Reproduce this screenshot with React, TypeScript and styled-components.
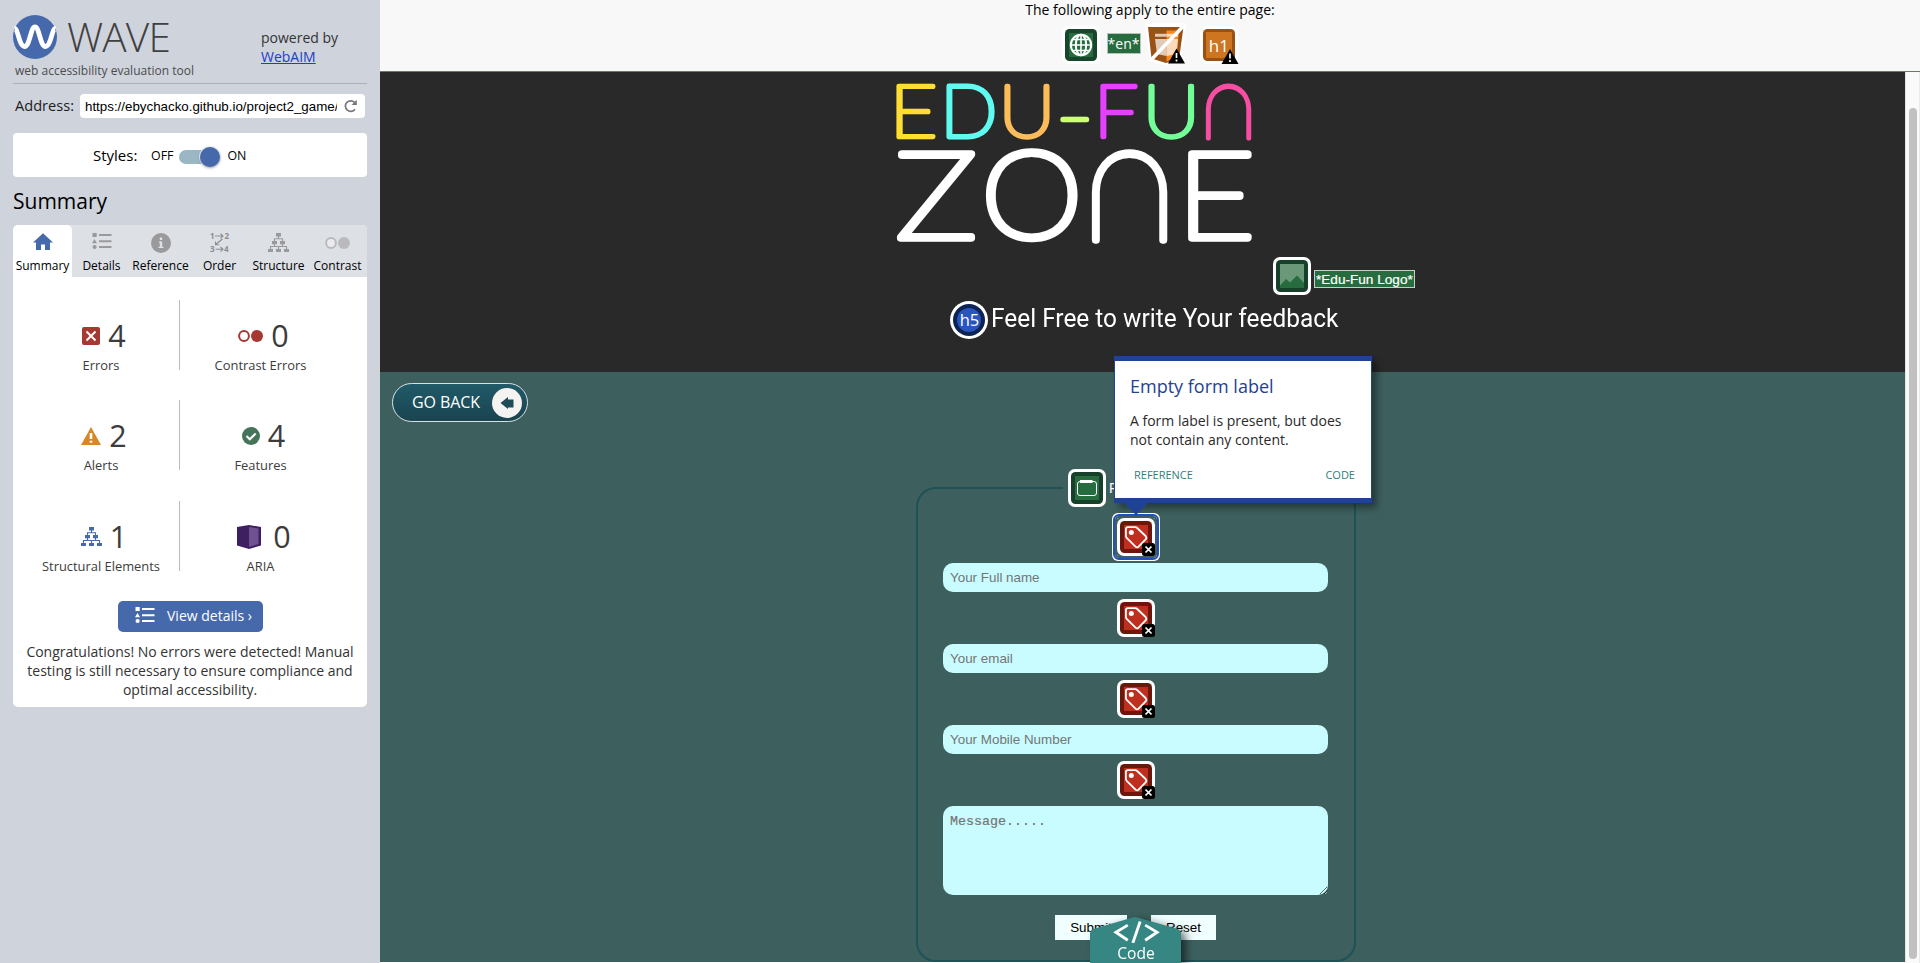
import React, { useLayoutEffect, useState } from 'react';
import styled, { createGlobalStyle, css } from 'styled-components';

const sans = '"Open Sans", "Noto Sans", sans-serif';
const arial = '"Liberation Sans", Arial, sans-serif';

const GlobalStyle = createGlobalStyle`
  *, *::before, *::after { box-sizing: border-box; }
  body { margin: 0; overflow: hidden; background: #fff; font-family: ${sans}; }
  svg { display: block; }
`;

const Shell = styled.div`
  display: flex;
  width: 1920px;
  height: 963px;
  overflow: hidden;
`;

/* ---------- sidebar ---------- */

const Sidebar = styled.aside`
  width: 380px;
  flex: none;
  padding: 0 13px;
  background: #ced3dc;
  color: #000;
`;

const Brand = styled.header`
  display: flex;
  justify-content: space-between;
  height: 84px;
  padding-top: 15px;
  border-bottom: 1px solid #adb1b5;
`;

const BrandRow = styled.div`
  display: flex;
  gap: 10px;
  height: 44px;
`;

const BrandName = styled.span`
  font-size: 40.5px;
  font-weight: 300;
  line-height: 44px;
  color: #404040;
  letter-spacing: -0.8px;
`;

const Tagline = styled.div`
  padding: 4px 0 0 2px;
  font-size: 12px;
  line-height: 16px;
  color: #4c4c4c;
  white-space: nowrap;
`;

const Powered = styled.div`
  width: 106px;
  padding-top: 13px;
  font-size: 14px;
  line-height: 19px;
  color: #333;
  a { color: #2040c0; }
`;

const AddressRow = styled.div`
  display: flex;
  align-items: center;
  height: 24px;
  margin-top: 10px;
  padding: 0 2px;
  font-size: 14.6px;
  line-height: 24px;
`;

const AddressLabel = styled.span`
  width: 65px;
  padding-bottom: 2px;
  color: #1c1c1c;
`;

const AddressBox = styled.div`
  display: flex;
  align-items: center;
  width: 285px;
  height: 24px;
  padding: 0 7px 0 5px;
  justify-content: space-between;
  background: #fff;
  border-radius: 4px;
`;

const Url = styled.span`
  width: 252px;
  overflow: hidden;
  white-space: nowrap;
  font: 13.33px/24px ${arial};
  padding-top: 1px;
`;

const StylesBar = styled.div`
  display: flex;
  align-items: center;
  height: 44px;
  margin-top: 15px;
  padding-left: 80px;
  background: #fff;
  border-radius: 4px;
  font-size: 12.4px;
`;

const StylesLabel = styled.span`
  width: 58px;
  font-size: 15px;
`;

const Switch = styled.span`
  display: flex;
  align-items: center;
  width: 35px;
  height: 14px;
  margin: 3px 13px 0 6px;
  border-radius: 7px;
  background: #9bb7c4;
`;

const Knob = styled.span`
  width: 20px;
  height: 20px;
  margin-left: 21px;
  flex: none;
  border-radius: 50%;
  background: #4669ab;
  box-shadow: 0 1px 3px rgba(0, 0, 0, 0.35), 0 0 0 1px #eef2f5;
`;

const SummaryTitle = styled.h2`
  margin: 10px 0 0;
  height: 38px;
  font-size: 21px;
  font-weight: 400;
  line-height: 29px;
`;

const Panel = styled.section`
  height: 482px;
  background: #fff;
  border-radius: 5px;
  overflow: hidden;
`;

const Tabs = styled.nav`
  display: grid;
  grid-template-columns: repeat(6, 59px);
  height: 52px;
  background: #dde0e5;
`;

const Tab = styled.div<{ $active?: boolean }>`
  display: flex;
  flex-direction: column;
  align-items: center;
  padding-top: 8px;
  font-size: 12px;
  line-height: 16px;
  white-space: nowrap;
  ${(p) => p.$active && css`
    background: #fff;
    border-radius: 5px 5px 0 0;
  `}
  svg { height: 20px; margin-bottom: 4.5px; }
`;

const Stats = styled.div`
  display: grid;
  grid-template-columns: 158px 161px;
  grid-template-rows: 100px 101px 99px;
  padding: 23px 0 0 9px;
`;

const Stat = styled.div<{ $divided?: boolean }>`
  height: 70px;
  display: flex;
  flex-direction: column;
  align-items: center;
  padding: 14px 0 0 1px;
  color: #3c3c3c;
  border-right: 1px solid ${(p) => (p.$divided ? '#bbb' : 'transparent')};
`;

const StatLine = styled.div`
  display: flex;
  align-items: center;
  gap: 8px;
  height: 43px;
  padding-left: 6px;
  font-size: 30.5px;
  line-height: 43px;
`;

const StatLabel = styled.div`
  font-size: 12.9px;
  line-height: 16px;
  white-space: nowrap;
`;

const DetailsButton = styled.button`
  display: flex;
  align-items: center;
  width: 145px;
  height: 31px;
  margin: 1px 0 0 105px;
  padding: 0 0 2px 17px;
  gap: 12px;
  border: 0;
  border-radius: 5px;
  background: #4669ab;
  color: #fff;
  font: 14px/29px ${sans};
  white-space: nowrap;
  svg { height: 17px; }
`;

const Verdict = styled.p`
  margin: 10px 8px 0;
  text-align: center;
  font-size: 14px;
  line-height: 19px;
  color: #333;
`;

/* ---------- page ---------- */

const Main = styled.main`
  position: relative;
  display: flex;
  flex-direction: column;
  width: 1540px;
`;

const PageBar = styled.div`
  display: flex;
  flex-direction: column;
  align-items: center;
  height: 72px;
  background: #f8f8f8;
  border-bottom: 1px solid #6f7a66;
  font-size: 14px;
  line-height: 20px;
`;

const PageIcons = styled.div`
  display: flex;
  align-items: flex-start;
  width: 177px;
  padding-top: 6px;
`;

const LangTag = styled.span`
  width: 34px;
  height: 21px;
  margin: 7px 6px 0 7px;
  background: #276c3e;
  border: 1px solid #b5c4ba;
  color: #fff;
  text-align: center;
  font-size: 14px;
  line-height: 19px;
`;

const Gap = styled.span`
  width: 13px;
`;

const Viewport = styled.div`
  display: flex;
  flex: 1;
`;

const Page = styled.div`
  width: 1525px;
`;

const ScrollTrack = styled.div`
  width: 15px;
  padding: 36px 3px 4px 3px;
  background: #fafafa;
  border-left: 1px solid #e4e4e4;
  border-right: 1px solid #eaeaea;
`;

const ScrollThumb = styled.div`
  width: 8px;
  height: 851px;
  border-radius: 4px;
  background: #c1c1c1;
`;

const Hero = styled.section`
  height: 300px;
  background: #292929;
  color: #fff;
`;

const LogoRow = styled.div`
  display: flex;
  align-items: flex-end;
  height: 223px;
  padding-left: 500px;
`;

const AltTag = styled.span`
  height: 18px;
  margin: 0 0 7px 3px;
  padding: 0 1px;
  background: #276c3e;
  border: 1px solid #c4cfc8;
  font: 13.6px/17px ${arial};
  -webkit-text-stroke: 0.2px #fff;
  white-space: nowrap;
`;

const FeedbackRow = styled.div`
  display: flex;
  align-items: center;
  height: 38px;
  margin-top: 6px;
  padding-left: 570px;
  gap: 3px;
`;

const Feedback = styled.h5`
  margin: 0;
  font: 400 25px/38px Roboto, sans-serif;
  padding-bottom: 3px;
  white-space: nowrap;
  transform: scaleX(0.977);
  transform-origin: 0 50%;
`;

const Content = styled.section`
  height: 590px;
  background: #3d605e;
  display: flex;
  align-items: flex-start;
`;

const GoBack = styled.a`
  display: flex;
  align-items: center;
  justify-content: space-between;
  width: 136px;
  height: 39px;
  margin: 11px 388px 0 12px;
  padding: 0 5px 0 19px;
  border: 1px solid #d5e2e2;
  border-radius: 20px;
  background: linear-gradient(#205a68, #1a4450);
  color: #fff;
  font-size: 16px;
  letter-spacing: -0.1px;
  line-height: 36px;
  white-space: nowrap;
  span { padding-bottom: 1px; }
`;

const FeedbackForm = styled.fieldset`
  width: 440px;
  height: 493px;
  margin: 97px 0 0;
  padding: 0;
  border: 2px solid #1f5156;
  border-radius: 20px;
`;

const Legend = styled.legend`
  display: flex;
  align-items: center;
  gap: 3px;
  width: 146px;
  height: 38px;
  margin: 0 auto;
  padding: 0 5px;
  color: #fff;
  font: 14px/38px ${arial};
`;

const Fields = styled.div`
  display: flex;
  flex-direction: column;
  align-items: center;
  padding-top: 11px;
  padding-right: 1px;
`;

const Field = styled.label`
  display: flex;
  flex-direction: column;
  align-items: center;
  gap: 7px;
  margin-bottom: 7px;
`;

const TagHolder = styled.span<{ $focused?: boolean }>`
  display: block;
  margin-left: 1px;
  ${(p) => p.$focused && css`
    outline: 2px solid #2151c0;
    outline-offset: 2px;
    border-radius: 2px;
    box-shadow: 0 0 0 2px #3d605e, 0 0 0 5px #fff;
  `}
`;

const box = css`
  display: block;
  width: 385px;
  border: 0;
  border-radius: 10px;
  background: #c8fcff;
  outline: none;
  &::placeholder { color: #757575; opacity: 1; }
`;

const Input = styled.input`
  ${box}
  height: 29px;
  padding: 0 7px;
  font: 13.4px ${arial};
`;

const Message = styled.textarea`
  ${box}
  height: 89px;
  padding: 8px 7px;
  font: 13.33px "Liberation Mono", monospace;
  -webkit-text-stroke: 0.2px #757575;
`;

const Actions = styled.div`
  display: flex;
  width: 161px;
  gap: 24px;
  margin-top: 13px;
`;

const FormButton = styled.button<{ $width: number }>`
  width: ${(p) => p.$width}px;
  height: 25px;
  padding: 0;
  border: 0;
  background: #f0feff;
  color: #000;
  font: 13.4px ${arial};
`;

/* ---------- overlays ---------- */

const Tooltip = styled.div`
  position: absolute;
  left: 734px;
  top: 356px;
  width: 258px;
  height: 147px;
  padding: 14px 16px 0 15px;
  background: #fff;
  border: 1px solid #1f4292;
  border-width: 5px 1px;
  box-shadow: 5px 5px 7px rgba(0, 0, 0, 0.4);
  color: #2a2a2a;
  font-size: 14px;
  line-height: 19px;
`;

const TipArrow = styled.svg`
  position: absolute;
  left: 7px;
  top: 141px;
`;

const TipTitle = styled.h3`
  margin: 0 0 14px;
  color: #1f4292;
  font-size: 18px;
  font-weight: 400;
  line-height: 22px;
`;

const TipLinks = styled.div`
  display: flex;
  justify-content: space-between;
  padding: 17px 0 0 4px;
  color: #2f7f79;
  font-size: 11px;
  line-height: 18px;
`;

const CodeTab = styled.div`
  position: absolute;
  left: 710px;
  top: 917px;
  width: 92px;
  height: 46px;
  filter: drop-shadow(5px 3px 4px rgba(0, 0, 0, 0.55));
`;

const CodeFace = styled.div`
  height: 46px;
  display: flex;
  flex-direction: column;
  align-items: center;
  background: #368783;
  clip-path: polygon(0 16px, 1px 14px, 3px 12px, 41px 1px, 45px 0, 49px 1px, 88px 12px, 90px 14px, 91px 16px, 91px 100%, 0 100%);
  color: #fff;
  font-size: 15.6px;
  line-height: 20px;
  padding-top: 4px;
`;

/* ---------- icons ---------- */

type FrameProps = { dark: string; fill: string; children?: React.ReactNode; mark?: 'x' | 'alert' };

const Frame = ({ dark, fill, children, mark }: FrameProps) => (
  <svg width="38" height="38" viewBox="0 0 38 38" overflow="visible">
    <rect width="38" height="38" rx="7" fill="#fff" />
    <rect x="3" y="3" width="32" height="32" rx="4.5" fill={dark} />
    <rect x="7" y="7" width="24" height="24" fill={fill} />
    {children}
    {mark === 'x' && (
      <g>
        <rect x="25" y="25" width="13" height="13" rx="2.5" fill="#000" />
        <path d="M28.5 28.5l6 6M34.5 28.5l-6 6" stroke="#fff" strokeWidth="1.7" />
      </g>
    )}
    {mark === 'alert' && <AlertMark x={21.5} y={23} />}
  </svg>
);

const AlertMark = ({ x, y }: { x: number; y: number }) => (
  <g transform={`translate(${x} ${y})`}>
    <path d="M8.5 0L17 15H0z" fill="#000" />
    <path d="M8.5 4.5v5M8.5 11v2" stroke="#fff" strokeWidth="1.7" />
  </g>
);

const TagIcon = () => (
  <Frame dark="#6d170c" fill="#be2f20" mark="x">
    <path d="M11 9.2h7.2q1.2 0 2 .8l8.4 8q1.6 1.7 0 3.4l-7 7.2q-1.5 1.6-3.1 0l-8.8-8.8q-.8-.8-.8-2v-6.5q0-2 2.1-2.1z" fill="none" stroke="#fff" strokeWidth="1.8" />
    <circle cx="14.3" cy="14.5" r="2.5" fill="#fff" />
  </Frame>
);

const GlobeIcon = () => (
  <Frame dark="#17462a" fill="#276c3e">
    <g fill="none" stroke="#fff" strokeWidth="2">
      <circle cx="19" cy="19" r="10.2" />
      <ellipse cx="19" cy="19" rx="5.2" ry="10.2" />
      <path d="M19 8.8v20.4M8.8 19h20.4M10.5 13.5h17M10.5 24.5h17" strokeWidth="1.6" />
    </g>
  </Frame>
);

const FieldsetIcon = () => (
  <Frame dark="#17402a" fill="#276c3e">
    <rect x="9.5" y="12.5" width="19" height="14" rx="2.5" fill="none" stroke="#fff" />
    <path d="M12 12.5h12.5" stroke="#fff" strokeWidth="3" />
  </Frame>
);

const ImageIcon = () => (
  <Frame dark="#17402a" fill="#6a9879">
    <path d="M7 31v-2.5l6-6.5 4 3.5 7-7 7 7.5V31z" fill="#276c3e" />
  </Frame>
);

const NoscriptIcon = () => (
  <svg width="40" height="38" viewBox="0 0 40 38" overflow="visible">
    <path d="M-2-2.5H39L34 36l-15.5 3.5L2.5 35z" fill="#fff" />
    <path d="M1 1h35.5L32 33l-13 4L4.5 32.5z" fill="#995213" />
    <path d="M19.5 4.5H32L29.5 31l-10 4.5z" fill="#f8891f" />
    <path d="M8 7.8h11.5v3H8zM8 13h11.5v17L10 28z" fill="#e0cab8" />
    <path d="M19.5 7.8H31v3H19.5zM19.5 13H31l-1.5 15-10 2z" fill="#fbdabb" />
    <path d="M3 35L36.5 0" stroke="#fff" strokeWidth="3.6" />
    <AlertMark x={21} y={22.5} />
  </svg>
);

const H1Icon = () => (
  <Frame dark="#995213" fill="#cd7520" mark="alert">
    <rect x="6" y="6" width="26" height="26" fill="#cd7520" />
    <text x="18.8" y="26" textAnchor="middle" fill="#fff" fontSize="17" fontFamily={sans}>h1</text>
  </Frame>
);

const H5Icon = () => (
  <svg width="38" height="38" viewBox="0 0 38 38">
    <circle cx="19" cy="19" r="19" fill="#fff" />
    <circle cx="19" cy="19" r="16" fill="#0f2352" />
    <circle cx="19" cy="19" r="12" fill="#2855bf" />
    <text x="19.5" y="25" textAnchor="middle" fill="#fff" fontSize="16.5" fontFamily={sans}>h5</text>
  </svg>
);

const WaveLogo = () => (
  <svg width="44" height="44" viewBox="0 0 44 44">
    <circle cx="22" cy="22" r="22" fill="#4669ab" />
    <path d="M1.5 13.5C5 13 6 31.5 11.5 31.5S17.5 12 22 12s5 19.5 10.5 19.5S39 13 42.5 13.5" fill="none" stroke="#fff" strokeWidth="4.8" />
  </svg>
);

const Reload = () => (
  <svg width="14" height="14" viewBox="0 0 14 14">
    <path d="M11 10.2A5.3 5.3 0 1 1 10.6 3.5" fill="none" stroke="#777" strokeWidth="1.7" />
    <path d="M12.8.8v5.2H7.5z" fill="#777" />
  </svg>
);

const HomeIcon = () => (
  <svg width="20" height="20" viewBox="0 0 20 20">
    <path d="M10 .3L20 9.5h-3V17h-5v-5.5H8V17H3V9.5H0z" fill="#4669ab" />
  </svg>
);

const ListIcon = ({ color, height = 20 }: { color: string; height?: number }) => (
  <svg width="20" height={height} viewBox={`0 0 20 ${height}`}>
    <g fill={color}>
      <path d="M.5 0h4.2v4H.5zM2.5 6l2.5 4.2H0z" />
      <circle cx="2.6" cy="14" r="2.1" />
      <path d="M7 1h12.5v2H7zM7 7.2h12.5v2H7zM7 13h12.5v2H7z" />
    </g>
  </svg>
);

const InfoIcon = () => (
  <svg width="20" height="20" viewBox="0 0 20 20">
    <circle cx="10" cy="10" r="10" fill="#9a9a9d" />
    <path d="M10 4.5v2.5M10 8.5v6.5" stroke="#dde0e5" strokeWidth="2.4" />
    <path d="M8 9.1H10M7.5 14.4h5" stroke="#dde0e5" strokeWidth="1.2" />
  </svg>
);

const OrderIcon = () => (
  <svg width="20" height="20" viewBox="0 0 20 20" overflow="visible">
    <g fill="#8d8d8f" fontFamily={sans} fontWeight="700" fontSize="8">
      <text x="0" y="5.8">1</text>
      <text x="14.5" y="5.8">2</text>
      <text x="0" y="19">3</text>
      <text x="14" y="19">4</text>
    </g>
    <path d="M5 3h7.5M10.5.7L13 3l-2.5 2.3M5.5 16.3h7M10.5 14l2.5 2.3-2.5 2.3M12.5 6L5.5 11.5M5.5 8.5v3.2h3.7" fill="none" stroke="#8d8d8f" strokeWidth="1.1" />
  </svg>
);

const TreeIcon = ({ color }: { color: string }) => (
  <svg width="21" height="20" viewBox="0 0 21 20">
    <path d="M8 0h5v3.5H8zM4 8h5v3.2H4zM12 8h5v3.2h-5zM0 16h5v3H0zM8 16h5v3H8zM16 16h5v3h-5z" fill={color} />
    <path d="M10.5 3v2.7M6.5 8V5.7h8V8M6.5 11v2.5M14.5 11v2.5M2.5 16v-2.5h16V16M10.5 13.5V16" fill="none" stroke={color} strokeWidth="1.1" />
  </svg>
);

const ContrastIcon = ({ color }: { color: string }) => (
  <svg width="25" height="20" viewBox="0 0 25 20">
    <circle cx="6" cy="10" r="4.9" fill="#fff" fillOpacity=".35" stroke={color} strokeWidth="2" />
    <circle cx="19" cy="10" r="6" fill={color} />
  </svg>
);

const ErrorIcon = () => (
  <svg width="18" height="18" viewBox="0 0 18 18">
    <rect width="18" height="18" rx="2" fill="#a53932" />
    <path d="M4.5 4.5l9 9M13.5 4.5l-9 9" stroke="#fff" strokeWidth="2" />
  </svg>
);

const AlertIcon = () => (
  <svg width="20" height="18" viewBox="0 0 20 18">
    <path d="M10 0l10 18H0z" fill="#d68827" />
    <path d="M10 6v6M10 13.7v2" stroke="#fff" strokeWidth="2.6" />
  </svg>
);

const FeatureIcon = () => (
  <svg width="18" height="18" viewBox="0 0 18 18">
    <circle cx="9" cy="9" r="9" fill="#44755a" />
    <path d="M4.5 9l3.3 3.2L13.7 6.5" fill="none" stroke="#fff" strokeWidth="2.1" />
  </svg>
);

const AriaIcon = () => (
  <svg width="29" height="24" viewBox="-1 0 29 24">
    <path d="M0 2L12 0l12 2v18.5L12 24 0 20.5z" fill="#3e2060" />
    <path d="M12 2l9.5 1.5v15.5L12 22z" fill="#6f5091" />
  </svg>
);

const BackArrow = () => (
  <svg width="30" height="30" viewBox="0 0 30 30">
    <circle cx="15" cy="15" r="15" fill="#f5f2f2" />
    <path d="M8.5 15l7.5-6v2.5h5.5v8H16V21z" fill="#1d4c56" />
  </svg>
);

const CodeGlyph = () => (
  <svg width="49" height="24" viewBox="0 0 49 24">
    <path d="M15 4.5L2 12.3l13 8.7M34 4.5l13 7.8L34 21M28.5.5l-8 23.5" fill="none" stroke="#fff" strokeWidth="3.1" />
  </svg>
);

/* ---------- logo ---------- */

type Letter = { ch: string; x: number; y: number; w: number; h: number; color: string; line: number };

const letters: Letter[] = [
  { ch: 'E', x: 16, y: 11.7, w: 39.5, h: 55.5, color: '#ffdd33', line: 4.9 },
  { ch: 'D', x: 66, y: 11.7, w: 48.5, h: 55.5, color: '#5ffbf1', line: 4.9 },
  { ch: 'U', x: 124, y: 11, w: 46, h: 57, color: '#fcbc5a', line: 4.9 },
  { ch: '–', x: 180, y: 45, w: 29.5, h: 5.7, color: '#ccff77', line: 5 },
  { ch: 'F', x: 220, y: 11.7, w: 38, h: 56, color: '#e640ff', line: 4.9 },
  { ch: 'U', x: 268, y: 11, w: 46.5, h: 57, color: '#73ff98', line: 4.9 },
  { ch: '∩', x: 325.5, y: 11, w: 46.5, h: 57, color: '#f54ea2', line: 4.3 },
  { ch: 'Z', x: 17, y: 78.3, w: 78, h: 91.7, color: '#fff', line: 8 },
  { ch: 'O', x: 105, y: 77, w: 93, h: 94.5, color: '#fff', line: 8 },
  { ch: '∩', x: 211, y: 77, w: 77, h: 94.5, color: '#fff', line: 6.8 },
  { ch: 'E', x: 307.5, y: 78.3, w: 64.5, h: 91.7, color: '#fff', line: 8 },
];

const logoFont = 'Lato, "DejaVu Sans", sans-serif';

// Scales one glyph so that its ink, stroke included, fills the letter's box.
const LogoLetter = ({ ch, x, y, w, h, color, line }: Letter) => {
  const [fit, setFit] = useState({ transform: 'scale(0)', stroke: 1 });
  useLayoutEffect(() => {
    const ctx = document.createElement('canvas').getContext('2d');
    if (!ctx) return;
    ctx.font = `100 100px ${logoFont}`;
    const m = ctx.measureText(ch);
    const inkW = m.actualBoundingBoxRight + m.actualBoundingBoxLeft;
    const inkH = m.actualBoundingBoxAscent + m.actualBoundingBoxDescent;
    const sx = (w - line) / inkW;
    // A dash keeps its own proportions, only centred in its box.
    const sy = ch === '–' ? sx : (h - line) / inkH;
    const tx = x + line / 2 + m.actualBoundingBoxLeft * sx;
    const ty = y + h / 2 + ((m.actualBoundingBoxAscent - m.actualBoundingBoxDescent) / 2) * sy;
    setFit({ transform: `translate(${tx} ${ty}) scale(${sx} ${sy})`, stroke: line / Math.sqrt(sx * sy) });
  }, [ch, x, y, w, h, line]);
  return (
    <text
      transform={fit.transform}
      fontFamily={logoFont}
      fontWeight="100"
      fontSize="100"
      fill={color}
      stroke={color}
      strokeWidth={fit.stroke}
      strokeLinejoin="round"
    >
      {ch}
    </text>
  );
};

const EduFunLogo = () => (
  <svg width="393" height="223" viewBox="0 0 393 223" role="img" aria-label="Edu-Fun Zone">
    {letters.map((l) => (
      <LogoLetter key={`${l.x}-${l.y}`} {...l} />
    ))}
  </svg>
);

/* ---------- data ---------- */

const gray = '#9a9a9d';

const tabs = [
  { label: 'Summary', icon: <HomeIcon /> },
  { label: 'Details', icon: <ListIcon color={gray} /> },
  { label: 'Reference', icon: <InfoIcon /> },
  { label: 'Order', icon: <OrderIcon /> },
  { label: 'Structure', icon: <TreeIcon color={gray} /> },
  { label: 'Contrast', icon: <ContrastIcon color="#bababc" /> },
];

const stats = [
  { label: 'Errors', count: 4, icon: <ErrorIcon /> },
  { label: 'Contrast Errors', count: 0, icon: <ContrastIcon color="#a53932" /> },
  { label: 'Alerts', count: 2, icon: <AlertIcon /> },
  { label: 'Features', count: 4, icon: <FeatureIcon /> },
  { label: 'Structural Elements', count: 1, icon: <TreeIcon color="#4669ab" /> },
  { label: 'ARIA', count: 0, icon: <AriaIcon /> },
];

const fields = ['Your Full name', 'Your email', 'Your Mobile Number'];

export default function App() {
  return (
    <Shell>
      <GlobalStyle />
      <Sidebar>
        <Brand>
          <div>
            <BrandRow>
              <WaveLogo />
              <BrandName>WAVE</BrandName>
            </BrandRow>
            <Tagline>web accessibility evaluation tool</Tagline>
          </div>
          <Powered>
            powered by
            <br />
            <a href="#webaim">WebAIM</a>
          </Powered>
        </Brand>
        <AddressRow>
          <AddressLabel>Address:</AddressLabel>
          <AddressBox>
            <Url>https://ebychacko.github.io/project2_game/</Url>
            <Reload />
          </AddressBox>
        </AddressRow>
        <StylesBar>
          <StylesLabel>Styles:</StylesLabel>
          OFF
          <Switch>
            <Knob />
          </Switch>
          ON
        </StylesBar>
        <SummaryTitle>Summary</SummaryTitle>
        <Panel>
          <Tabs>
            {tabs.map((t, i) => (
              <Tab key={t.label} $active={i === 0}>
                {t.icon}
                {t.label}
              </Tab>
            ))}
          </Tabs>
          <Stats>
            {stats.map((s, i) => (
              <Stat key={s.label} $divided={i % 2 === 0}>
                <StatLine>
                  {s.icon}
                  {s.count}
                </StatLine>
                <StatLabel>{s.label}</StatLabel>
              </Stat>
            ))}
          </Stats>
          <DetailsButton>
            <ListIcon color="#fff" height={17} />
            View details ›
          </DetailsButton>
          <Verdict>
            Congratulations! No errors were detected! Manual testing is still necessary to ensure compliance and
            optimal accessibility.
          </Verdict>
        </Panel>
      </Sidebar>
      <Main>
        <PageBar>
          The following apply to the entire page:
          <PageIcons>
            <GlobeIcon />
            <LangTag>*en*</LangTag>
            <NoscriptIcon />
            <Gap />
            <H1Icon />
          </PageIcons>
        </PageBar>
        <Viewport>
          <Page>
            <Hero>
              <LogoRow>
                <EduFunLogo />
                <ImageIcon />
                <AltTag>*Edu-Fun Logo*</AltTag>
              </LogoRow>
              <FeedbackRow>
                <H5Icon />
                <Feedback>Feel Free to write Your feedback</Feedback>
              </FeedbackRow>
            </Hero>
            <Content>
              <GoBack>
                <span>GO BACK</span>
                <BackArrow />
              </GoBack>
              <FeedbackForm>
                <Legend>
                  <FieldsetIcon />F
                </Legend>
                <Fields>
                  {fields.map((f, i) => (
                    <Field key={f}>
                      <TagHolder $focused={i === 0}>
                        <TagIcon />
                      </TagHolder>
                      <Input placeholder={f} />
                    </Field>
                  ))}
                  <Field>
                    <TagHolder>
                      <TagIcon />
                    </TagHolder>
                    <Message placeholder="Message....." />
                  </Field>
                  <Actions>
                    <FormButton $width={72}>Submit</FormButton>
                    <FormButton $width={65}>Reset</FormButton>
                  </Actions>
                </Fields>
              </FeedbackForm>
            </Content>
          </Page>
          <ScrollTrack>
            <ScrollThumb />
          </ScrollTrack>
        </Viewport>
        <Tooltip>
          <TipTitle>Empty form label</TipTitle>
          A form label is present, but does not contain any content.
          <TipLinks>
            <span>REFERENCE</span>
            <span>CODE</span>
          </TipLinks>
          <TipArrow width="28" height="14" viewBox="0 0 28 14">
            <path d="M1 0h26L14 13z" fill="#1f4292" />
          </TipArrow>
        </Tooltip>
        <CodeTab>
          <CodeFace>
            <CodeGlyph />
            Code
          </CodeFace>
        </CodeTab>
      </Main>
    </Shell>
  );
}
